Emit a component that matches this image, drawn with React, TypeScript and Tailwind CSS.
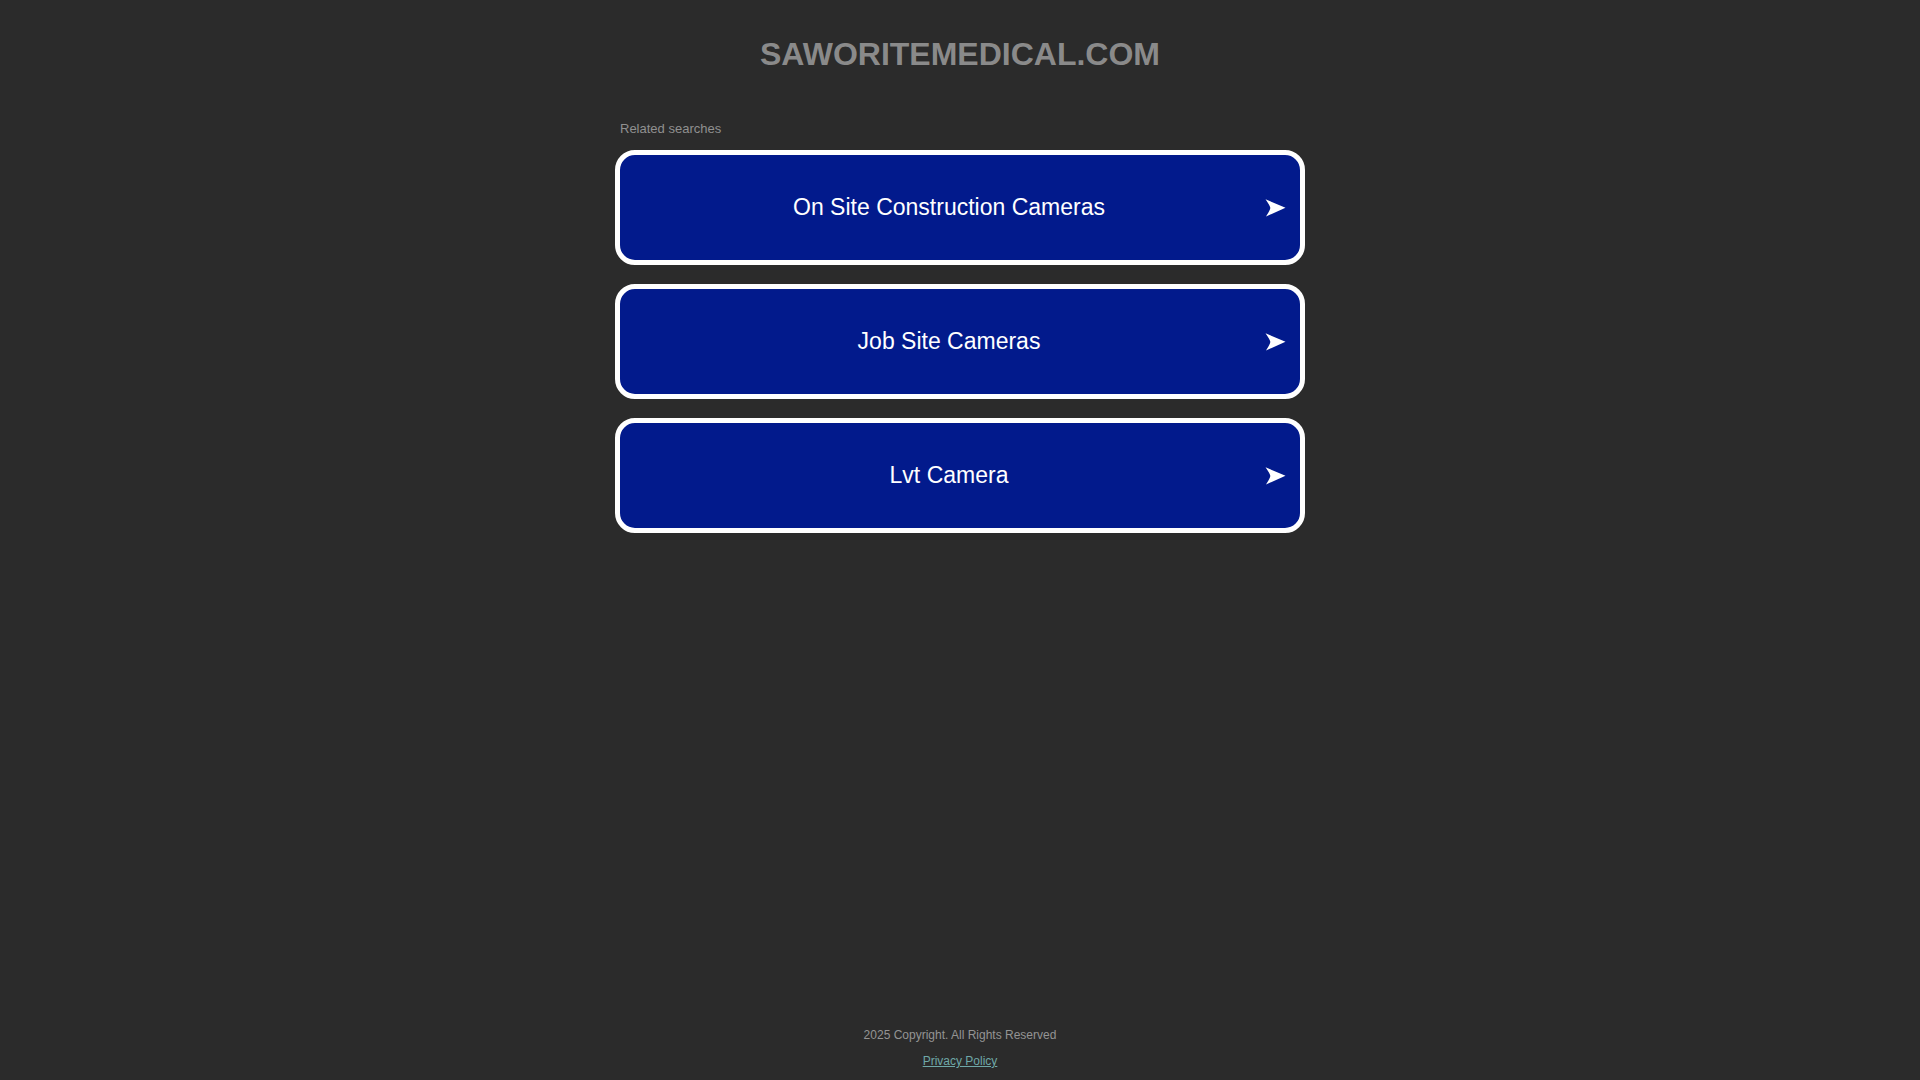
import React from "react";

const items = ["On Site Construction Cameras", "Job Site Cameras", "Lvt Camera"];

function Arrow() {
  return (
    <svg width="21" height="18" viewBox="0 0 21 18" className="absolute right-[14px] top-1/2 -translate-y-1/2">
      <path d="M0.5 0.3 L20.5 8.8 L1 17.5 Q5.5 10.5 5.3 8.8 Q5 6.8 0.5 0.3 Z" fill="#ffffff" />
    </svg>
  );
}

export default function App() {
  return (
    <div
      className="min-h-screen bg-[#2b2b2b] flex flex-col items-center"
      style={{ fontFamily: '"Liberation Sans", Arial, sans-serif' }}
    >
      <h1 className="mt-[36px] text-[32px] leading-[37px] font-bold text-[#8a8a8a]">
        SAWORITEMEDICAL.COM
      </h1>
      <div className="w-[690px] mt-[48px]">
        <div className="pl-[5px] text-[13px] leading-[15px] text-[#909090]">Related searches</div>
        <div className="mt-[14px] flex flex-col gap-[19px]">
          {items.map((t) => (
            <a
              key={t}
              href="#"
              className="relative h-[115px] border-[5px] border-white rounded-[20px] bg-[#021a8c] flex items-center justify-center pr-[22px]"
            >
              <span className="text-[23px] leading-[27px] text-white">{t}</span>
              <Arrow />
            </a>
          ))}
        </div>
      </div>
      <div className="mt-auto pb-[12px] flex flex-col items-center gap-[12px]">
        <div className="text-[12px] leading-[14px] text-[#949494]">2025 Copyright. All Rights Reserved</div>
        <a href="#" className="text-[12px] leading-[14px] text-[#6fa8a8] underline">Privacy Policy</a>
      </div>
    </div>
  );
}
